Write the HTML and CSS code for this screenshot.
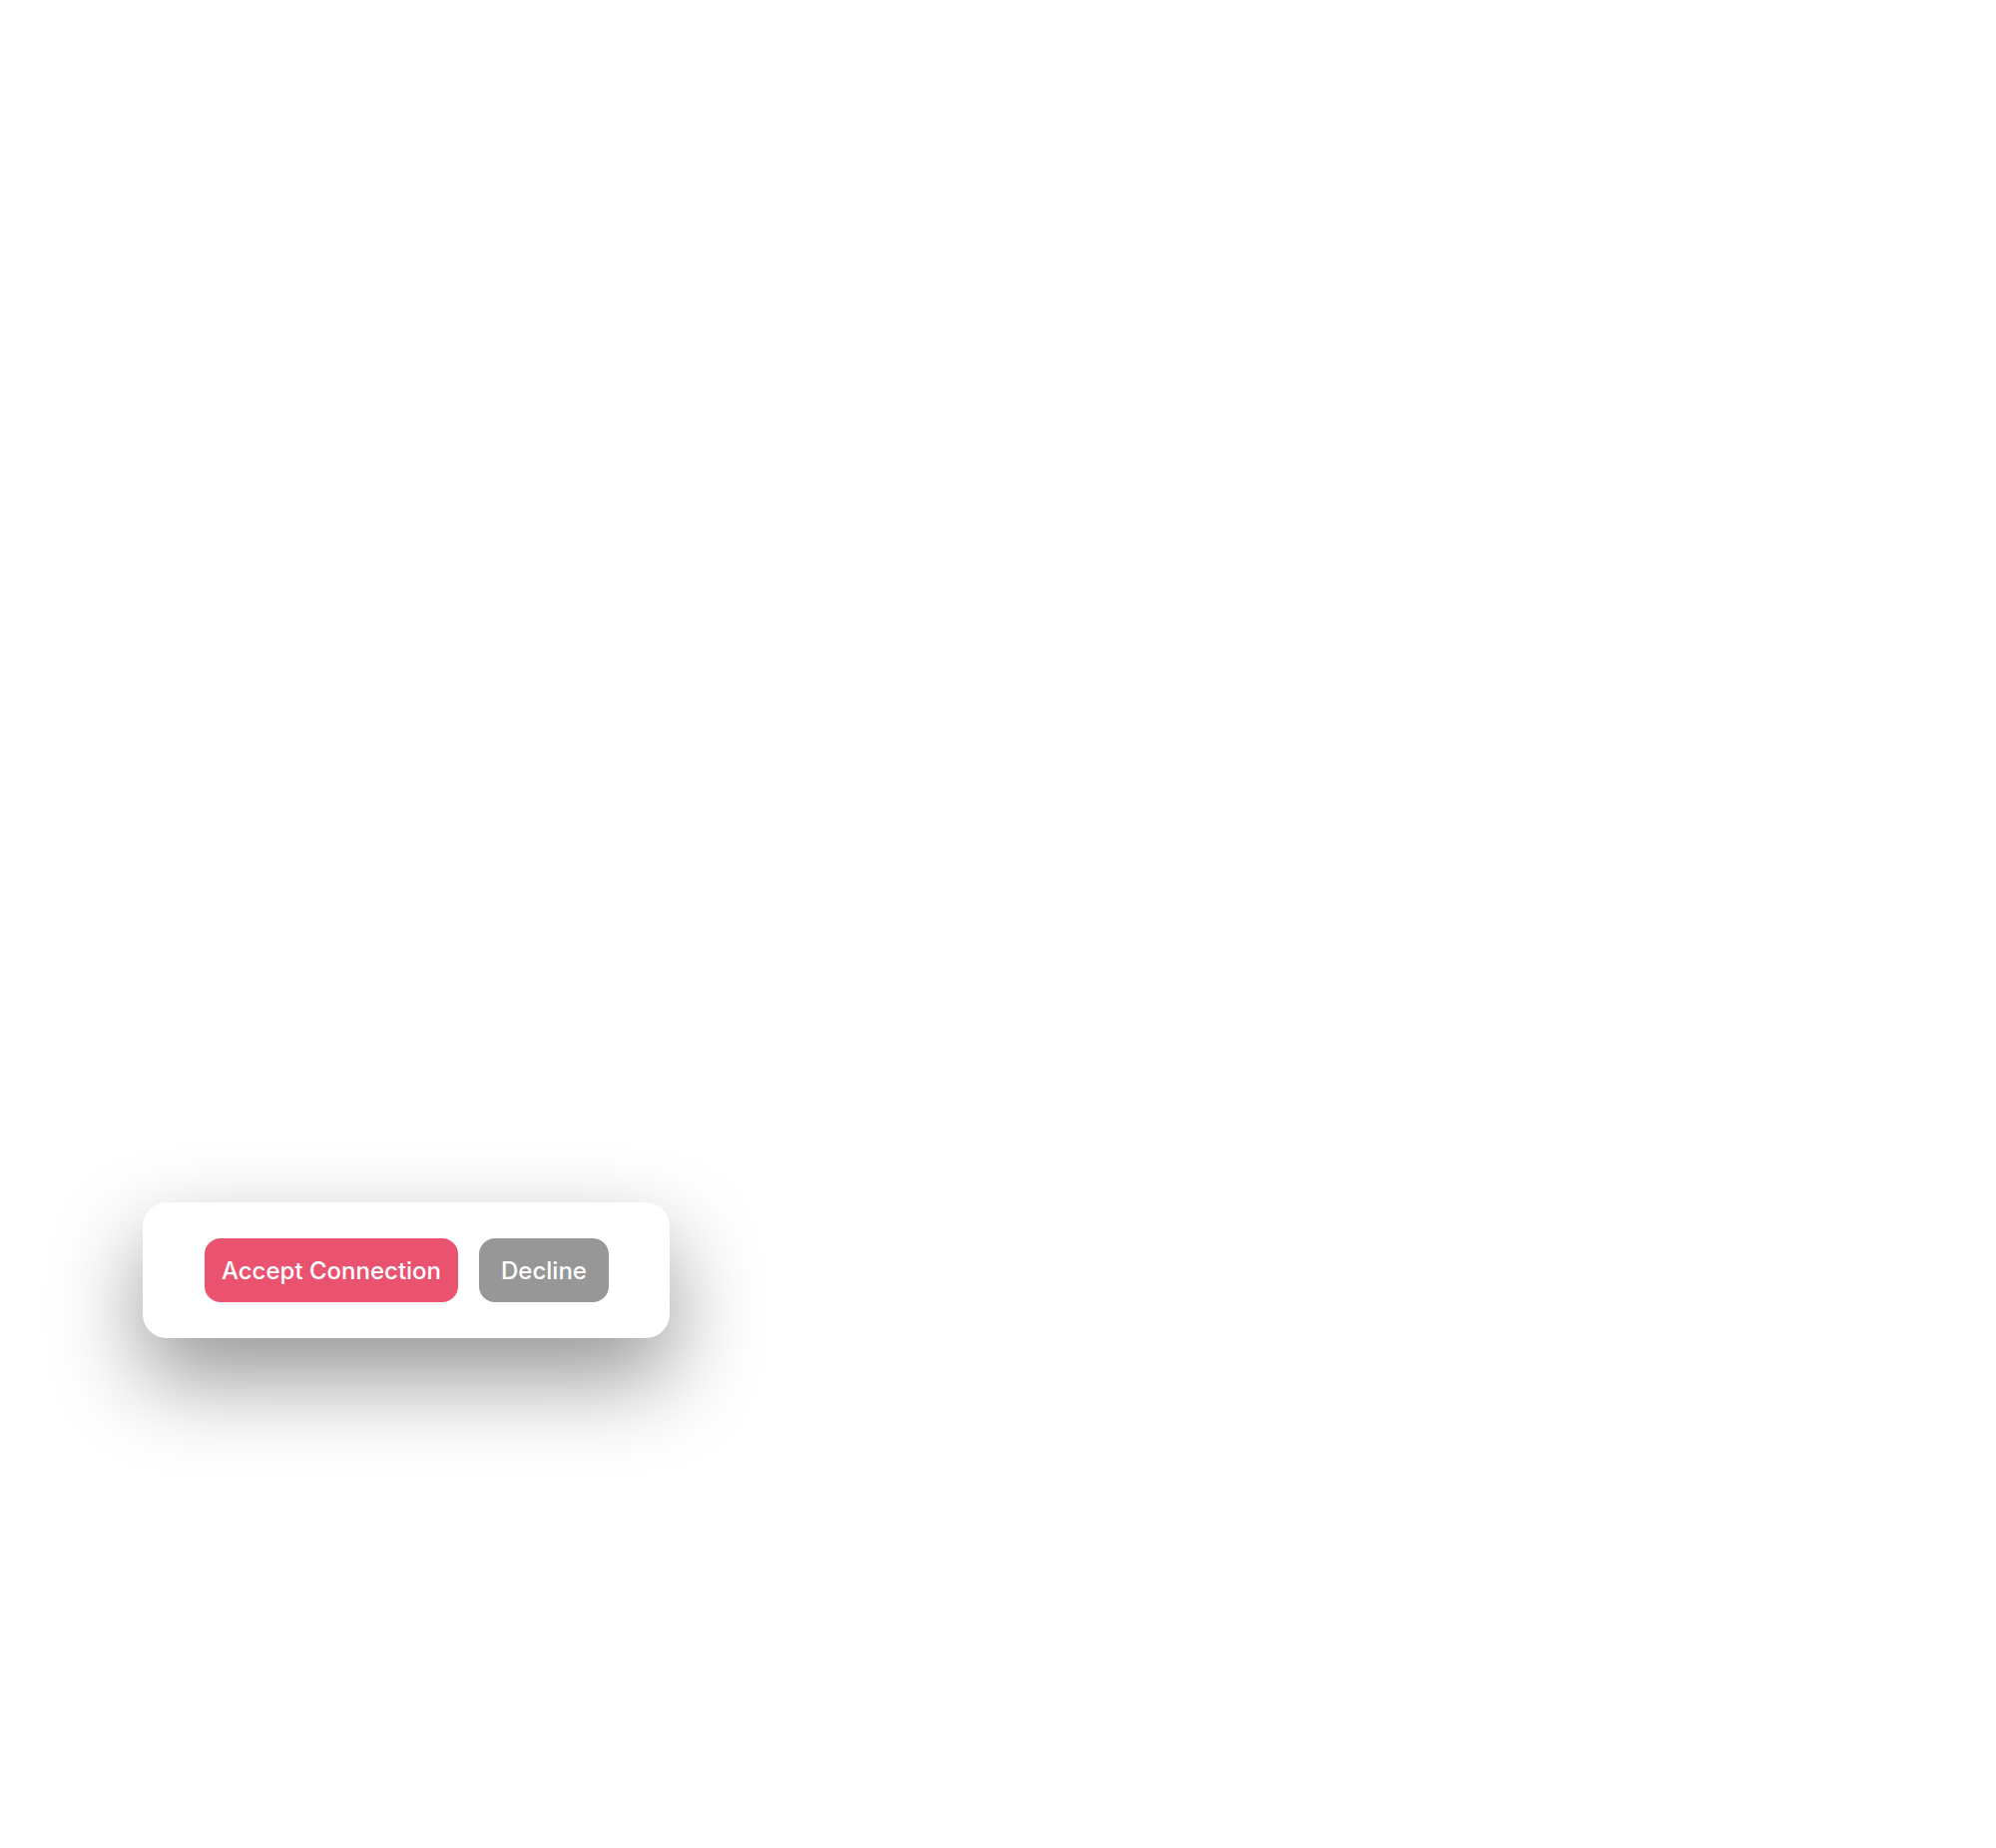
FILE: index.html
```html
<!DOCTYPE html>
<html lang="en">
<head>
    <meta charset="UTF-8">
    <meta name="viewport" content="width=device-width, initial-scale=1.0">
    <title>Connection Request</title>
    <link rel="stylesheet" href="styles.css">
</head>
<body>
<div class="page">
    <div class="request-card">
        <button class="btn btn-accept">Accept Connection</button>
        <button class="btn btn-decline">Decline</button>
    </div>
</div>
</body>
</html>
```

FILE: styles.css
```css
body {
    margin: 0;
    background-color: #fff;
    font-family: Inter, "Noto Sans", Arial, sans-serif;
}
.page {
    min-height: 100vh;
    box-sizing: border-box;
    padding: 1205px 0 0 143px;
    display: flex;
    align-items: flex-start;
}
.request-card {
    display: flex;
    gap: 21px;
    padding: 36px 61px 36px 62px;
    background-color: #fff;
    border-radius: 24px;
    box-shadow: 0 40px 90px rgba(0, 0, 0, 0.42);
}
.btn {
    height: 64px;
    padding: 0;
    border: none;
    border-radius: 16px;
    color: #fff;
    font-family: inherit;
    font-size: 24px;
    font-weight: 500;
    cursor: pointer;
}
.btn-accept {
    width: 254px;
    background-color: #e95370;
}
.btn-decline {
    width: 130px;
    background-color: #979797;
}
```
